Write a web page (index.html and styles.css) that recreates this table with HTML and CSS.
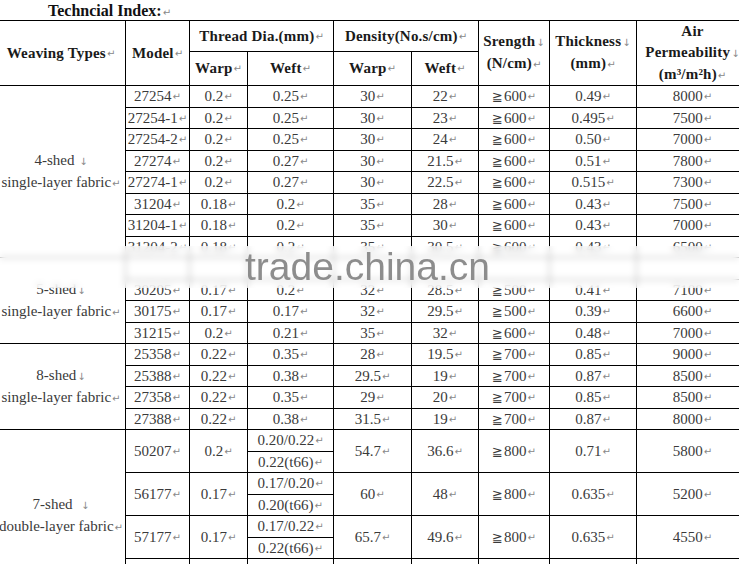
FILE: index.html
```html
<!DOCTYPE html>
<html>
<head>
<meta charset="utf-8">
<title>Techncial Index</title>
<link rel="stylesheet" href="styles.css">
</head>
<body>
<div class="page">
  <h1 class="title">Techncial Index:<span class="pm">↵</span></h1>
  <div class="grid">
    <div class="c h rs2">Weaving Types<span class="pm">↵</span></div>
    <div class="c h rs2">Model <span class="pm">↵</span></div>
    <div class="c h cs2">Thread Dia.(mm)<span class="pm">↵</span></div>
    <div class="c h cs2">Density(No.s/cm)<span class="pm">↵</span></div>
    <div class="c h rs2"><div>Srength<span class="da">↓</span><br>(N/cm)<span class="pm">↵</span></div></div>
    <div class="c h rs2"><div>Thickness<span class="da">↓</span><br>(mm)<span class="pm">↵</span></div></div>
    <div class="c h rs2"><div>Air<br>Permeability<span class="da">↓</span><br>(m³/m²h)<span class="pm">↵</span></div></div>
    <div class="c h">Warp<span class="pm">↵</span></div>
    <div class="c h">Weft<span class="pm">↵</span></div>
    <div class="c h">Warp<span class="pm">↵</span></div>
    <div class="c h">Weft<span class="pm">↵</span></div>

    <div class="c g rs8"><div>4-shed <span class="da">↓</span><br>single-layer fabric<span class="pm">↵</span></div></div>
    <div class="c">27254<span class="pm">↵</span></div><div class="c">0.2<span class="pm">↵</span></div><div class="c">0.25<span class="pm">↵</span></div><div class="c">30<span class="pm">↵</span></div><div class="c">22<span class="pm">↵</span></div><div class="c"><span class="ge">≧</span>600<span class="pm">↵</span></div><div class="c">0.49<span class="pm">↵</span></div><div class="c">8000<span class="pm">↵</span></div>
    <div class="c">27254-1<span class="pm">↵</span></div><div class="c">0.2<span class="pm">↵</span></div><div class="c">0.25<span class="pm">↵</span></div><div class="c">30<span class="pm">↵</span></div><div class="c">23<span class="pm">↵</span></div><div class="c"><span class="ge">≧</span>600<span class="pm">↵</span></div><div class="c">0.495<span class="pm">↵</span></div><div class="c">7500<span class="pm">↵</span></div>
    <div class="c">27254-2<span class="pm">↵</span></div><div class="c">0.2<span class="pm">↵</span></div><div class="c">0.25<span class="pm">↵</span></div><div class="c">30<span class="pm">↵</span></div><div class="c">24<span class="pm">↵</span></div><div class="c"><span class="ge">≧</span>600<span class="pm">↵</span></div><div class="c">0.50<span class="pm">↵</span></div><div class="c">7000<span class="pm">↵</span></div>
    <div class="c">27274<span class="pm">↵</span></div><div class="c">0.2<span class="pm">↵</span></div><div class="c">0.27<span class="pm">↵</span></div><div class="c">30<span class="pm">↵</span></div><div class="c">21.5<span class="pm">↵</span></div><div class="c"><span class="ge">≧</span>600<span class="pm">↵</span></div><div class="c">0.51<span class="pm">↵</span></div><div class="c">7800<span class="pm">↵</span></div>
    <div class="c">27274-1<span class="pm">↵</span></div><div class="c">0.2<span class="pm">↵</span></div><div class="c">0.27<span class="pm">↵</span></div><div class="c">30<span class="pm">↵</span></div><div class="c">22.5<span class="pm">↵</span></div><div class="c"><span class="ge">≧</span>600<span class="pm">↵</span></div><div class="c">0.515<span class="pm">↵</span></div><div class="c">7300<span class="pm">↵</span></div>
    <div class="c">31204<span class="pm">↵</span></div><div class="c">0.18<span class="pm">↵</span></div><div class="c">0.2<span class="pm">↵</span></div><div class="c">35<span class="pm">↵</span></div><div class="c">28<span class="pm">↵</span></div><div class="c"><span class="ge">≧</span>600<span class="pm">↵</span></div><div class="c">0.43<span class="pm">↵</span></div><div class="c">7500<span class="pm">↵</span></div>
    <div class="c">31204-1<span class="pm">↵</span></div><div class="c">0.18<span class="pm">↵</span></div><div class="c">0.2<span class="pm">↵</span></div><div class="c">35<span class="pm">↵</span></div><div class="c">30<span class="pm">↵</span></div><div class="c"><span class="ge">≧</span>600<span class="pm">↵</span></div><div class="c">0.43<span class="pm">↵</span></div><div class="c">7000<span class="pm">↵</span></div>
    <div class="c">31204-2<span class="pm">↵</span></div><div class="c">0.18<span class="pm">↵</span></div><div class="c">0.2<span class="pm">↵</span></div><div class="c">35<span class="pm">↵</span></div><div class="c">30.5<span class="pm">↵</span></div><div class="c"><span class="ge">≧</span>600<span class="pm">↵</span></div><div class="c">0.43<span class="pm">↵</span></div><div class="c">6500<span class="pm">↵</span></div>

    <div class="c g rs4"><div>5-shed<span class="da">↓</span><br>single-layer fabric<span class="pm">↵</span></div></div>
    <div class="c"></div><div class="c"></div><div class="c"></div><div class="c"></div><div class="c"></div><div class="c"></div><div class="c"></div><div class="c"></div>
    <div class="c">30205<span class="pm">↵</span></div><div class="c">0.17<span class="pm">↵</span></div><div class="c">0.2<span class="pm">↵</span></div><div class="c">32<span class="pm">↵</span></div><div class="c">28.5<span class="pm">↵</span></div><div class="c"><span class="ge">≧</span>500<span class="pm">↵</span></div><div class="c">0.41<span class="pm">↵</span></div><div class="c">7100<span class="pm">↵</span></div>
    <div class="c">30175<span class="pm">↵</span></div><div class="c">0.17<span class="pm">↵</span></div><div class="c">0.17<span class="pm">↵</span></div><div class="c">32<span class="pm">↵</span></div><div class="c">29.5<span class="pm">↵</span></div><div class="c"><span class="ge">≧</span>500<span class="pm">↵</span></div><div class="c">0.39<span class="pm">↵</span></div><div class="c">6600<span class="pm">↵</span></div>
    <div class="c">31215<span class="pm">↵</span></div><div class="c">0.2<span class="pm">↵</span></div><div class="c">0.21<span class="pm">↵</span></div><div class="c">35<span class="pm">↵</span></div><div class="c">32<span class="pm">↵</span></div><div class="c"><span class="ge">≧</span>600<span class="pm">↵</span></div><div class="c">0.48<span class="pm">↵</span></div><div class="c">7000<span class="pm">↵</span></div>

    <div class="c g rs4"><div>8-shed<span class="da">↓</span><br>single-layer fabric<span class="pm">↵</span></div></div>
    <div class="c">25358<span class="pm">↵</span></div><div class="c">0.22<span class="pm">↵</span></div><div class="c">0.35<span class="pm">↵</span></div><div class="c">28<span class="pm">↵</span></div><div class="c">19.5<span class="pm">↵</span></div><div class="c"><span class="ge">≧</span>700<span class="pm">↵</span></div><div class="c">0.85<span class="pm">↵</span></div><div class="c">9000<span class="pm">↵</span></div>
    <div class="c">25388<span class="pm">↵</span></div><div class="c">0.22<span class="pm">↵</span></div><div class="c">0.38<span class="pm">↵</span></div><div class="c">29.5<span class="pm">↵</span></div><div class="c">19<span class="pm">↵</span></div><div class="c"><span class="ge">≧</span>700<span class="pm">↵</span></div><div class="c">0.87<span class="pm">↵</span></div><div class="c">8500<span class="pm">↵</span></div>
    <div class="c">27358<span class="pm">↵</span></div><div class="c">0.22<span class="pm">↵</span></div><div class="c">0.35<span class="pm">↵</span></div><div class="c">29<span class="pm">↵</span></div><div class="c">20<span class="pm">↵</span></div><div class="c"><span class="ge">≧</span>700<span class="pm">↵</span></div><div class="c">0.85<span class="pm">↵</span></div><div class="c">8500<span class="pm">↵</span></div>
    <div class="c">27388<span class="pm">↵</span></div><div class="c">0.22<span class="pm">↵</span></div><div class="c">0.38<span class="pm">↵</span></div><div class="c">31.5<span class="pm">↵</span></div><div class="c">19<span class="pm">↵</span></div><div class="c"><span class="ge">≧</span>700<span class="pm">↵</span></div><div class="c">0.87<span class="pm">↵</span></div><div class="c">8000<span class="pm">↵</span></div>

    <div class="c g rs8"><div>7-shed&nbsp; <span class="da">↓</span><br>double-layer fabric<span class="pm">↵</span></div></div>
    <div class="c rs2">50207<span class="pm">↵</span></div><div class="c rs2">0.2<span class="pm">↵</span></div><div class="c">0.20/0.22<span class="pm">↵</span></div><div class="c rs2">54.7<span class="pm">↵</span></div><div class="c rs2">36.6<span class="pm">↵</span></div><div class="c rs2"><span class="ge">≧</span>800<span class="pm">↵</span></div><div class="c rs2">0.71<span class="pm">↵</span></div><div class="c rs2">5800<span class="pm">↵</span></div>
    <div class="c">0.22(t66)<span class="pm">↵</span></div>
    <div class="c rs2">56177<span class="pm">↵</span></div><div class="c rs2">0.17<span class="pm">↵</span></div><div class="c">0.17/0.20<span class="pm">↵</span></div><div class="c rs2">60<span class="pm">↵</span></div><div class="c rs2">48<span class="pm">↵</span></div><div class="c rs2"><span class="ge">≧</span>800<span class="pm">↵</span></div><div class="c rs2">0.635<span class="pm">↵</span></div><div class="c rs2">5200<span class="pm">↵</span></div>
    <div class="c">0.20(t66)<span class="pm">↵</span></div>
    <div class="c rs2">57177<span class="pm">↵</span></div><div class="c rs2">0.17<span class="pm">↵</span></div><div class="c">0.17/0.22<span class="pm">↵</span></div><div class="c rs2">65.7<span class="pm">↵</span></div><div class="c rs2">49.6<span class="pm">↵</span></div><div class="c rs2"><span class="ge">≧</span>800<span class="pm">↵</span></div><div class="c rs2">0.635<span class="pm">↵</span></div><div class="c rs2">4550<span class="pm">↵</span></div>
    <div class="c">0.22(t66)<span class="pm">↵</span></div>
    <div class="c rs2"></div><div class="c rs2"></div><div class="c"></div><div class="c rs2"></div><div class="c rs2"></div><div class="c rs2"></div><div class="c rs2"></div><div class="c rs2"></div>
    <div class="c"></div>
  </div>
  <div class="watermark"><span class="wm-text">trade.china.cn</span></div>
</div>
</body>
</html>
```

FILE: styles.css
```css
html, body {
  margin: 0;
  padding: 0;
  background: #fff;
  overflow: hidden;
}

.page {
  position: relative;
  width: 739px;
  height: 564px;
  overflow: hidden;
  font-family: "Liberation Serif", "Times New Roman", serif;
  color: #3a3a3a;
}

.title {
  margin: 0;
  height: 20px;
  padding-left: 48px;
  font-size: 16px;
  line-height: 22px;
  font-weight: bold;
  color: #111;
  white-space: nowrap;
}

.grid {
  display: grid;
  grid-template-columns: 128px 63px 57px 85px 77px 66px 70px 86px 111px;
  grid-template-rows: 30px 33px repeat(12, 21px 20px);
  gap: 1px;
  padding: 1px;
  background: #000;
  margin-left: -4px;
  width: max-content;
}

.c {
  background: #fff;
  display: flex;
  align-items: center;
  justify-content: center;
  text-align: center;
  font-size: 15px;
  line-height: 21px;
  white-space: nowrap;
}

.h {
  font-weight: bold;
  color: #1a1a1a;
  letter-spacing: 0.2px;
}

.g {
  line-height: 21px;
}

.rs2 { grid-row: span 2; }
.rs4 { grid-row: span 4; }
.rs8 { grid-row: span 8; }
.cs2 { grid-column: span 2; }

.pm {
  font-family: "DejaVu Sans", sans-serif;
  font-size: 10px;
  font-weight: normal;
  color: #888;
  margin-left: 1px;
  letter-spacing: 0;
}

.da {
  font-family: "DejaVu Sans", sans-serif;
  font-size: 10px;
  font-weight: normal;
  color: #888;
  margin-left: 1px;
}

.ge {
  font-family: "DejaVu Sans", sans-serif;
  font-size: 13px;
  margin-right: 1px;
}

.watermark {
  position: absolute;
  left: 0;
  top: 246px;
  width: 739px;
  height: 42px;
  background: rgba(255, 255, 255, 0.65);
  backdrop-filter: blur(3px);
  -webkit-backdrop-filter: blur(3px);
}

.wm-text {
  position: absolute;
  left: 245px;
  top: 1px;
  font-family: "Liberation Sans", Arial, sans-serif;
  font-size: 39px;
  line-height: 39px;
  color: #8d8d8d;
  white-space: nowrap;
}
```
